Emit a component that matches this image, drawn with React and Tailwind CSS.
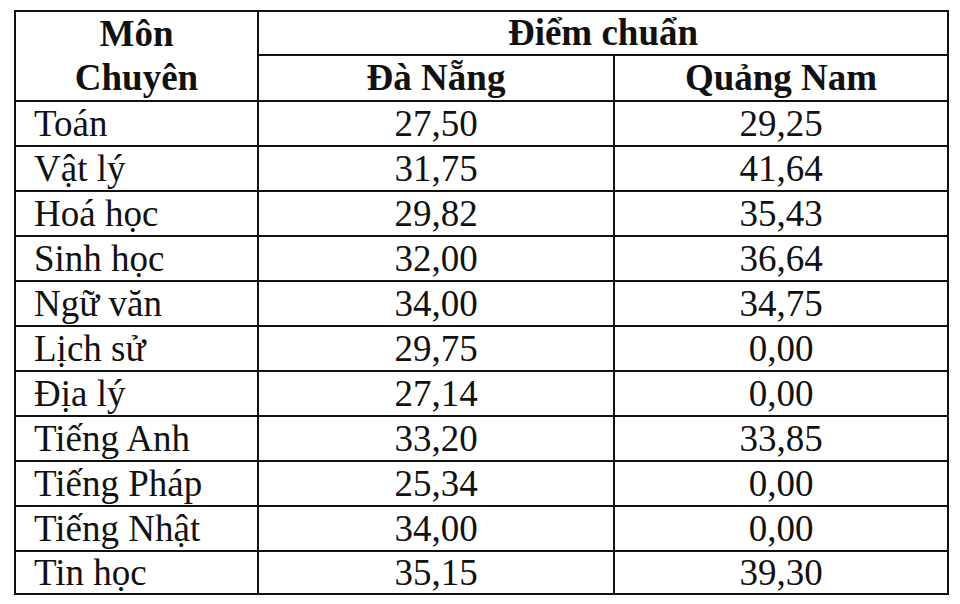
import React from "react";

const rows = [
  ["Toán", "27,50", "29,25"],
  ["Vật lý", "31,75", "41,64"],
  ["Hoá học", "29,82", "35,43"],
  ["Sinh học", "32,00", "36,64"],
  ["Ngữ văn", "34,00", "34,75"],
  ["Lịch sử", "29,75", "0,00"],
  ["Địa lý", "27,14", "0,00"],
  ["Tiếng Anh", "33,20", "33,85"],
  ["Tiếng Pháp", "25,34", "0,00"],
  ["Tiếng Nhật", "34,00", "0,00"],
  ["Tin học", "35,15", "39,30"],
];

export default function App() {
  return (
    <div className="w-[960px] h-[604px] bg-white overflow-hidden pt-[10px] pl-[14px]">
      <table
        className="table-fixed border-collapse w-[933px] text-[37px] text-[#111]"
        style={{ fontFamily: '"Liberation Serif", "Times New Roman", serif' }}
      >
        <colgroup>
          <col className="w-[243px]" />
          <col className="w-[356px]" />
          <col className="w-[334px]" />
        </colgroup>
        <thead>
          <tr className="h-[43px]">
            <th rowSpan={2} className="border-2 border-[#111] font-bold text-center align-middle leading-[44px] p-0">
              Môn<br />Chuyên
            </th>
            <th colSpan={2} className="border-2 border-[#111] font-bold text-center align-middle leading-[41px] p-0">
              Điểm chuẩn
            </th>
          </tr>
          <tr className="h-[45px]">
            <th className="border-2 border-[#111] font-bold text-center align-middle leading-[41px] p-0">Đà Nẵng</th>
            <th className="border-2 border-[#111] font-bold text-center align-middle leading-[41px] p-0">Quảng Nam</th>
          </tr>
        </thead>
        <tbody>
          {rows.map((r, i) => (
            <tr key={i} className={i === rows.length - 1 ? "h-[42px]" : "h-[45px]"}>
              <td className="border-2 border-[#111] text-left align-middle leading-[41px] p-0 pl-[18px]">{r[0]}</td>
              <td className="border-2 border-[#111] text-center align-middle leading-[41px] p-0">{r[1]}</td>
              <td className="border-2 border-[#111] text-center align-middle leading-[41px] p-0">{r[2]}</td>
            </tr>
          ))}
        </tbody>
      </table>
    </div>
  );
}
